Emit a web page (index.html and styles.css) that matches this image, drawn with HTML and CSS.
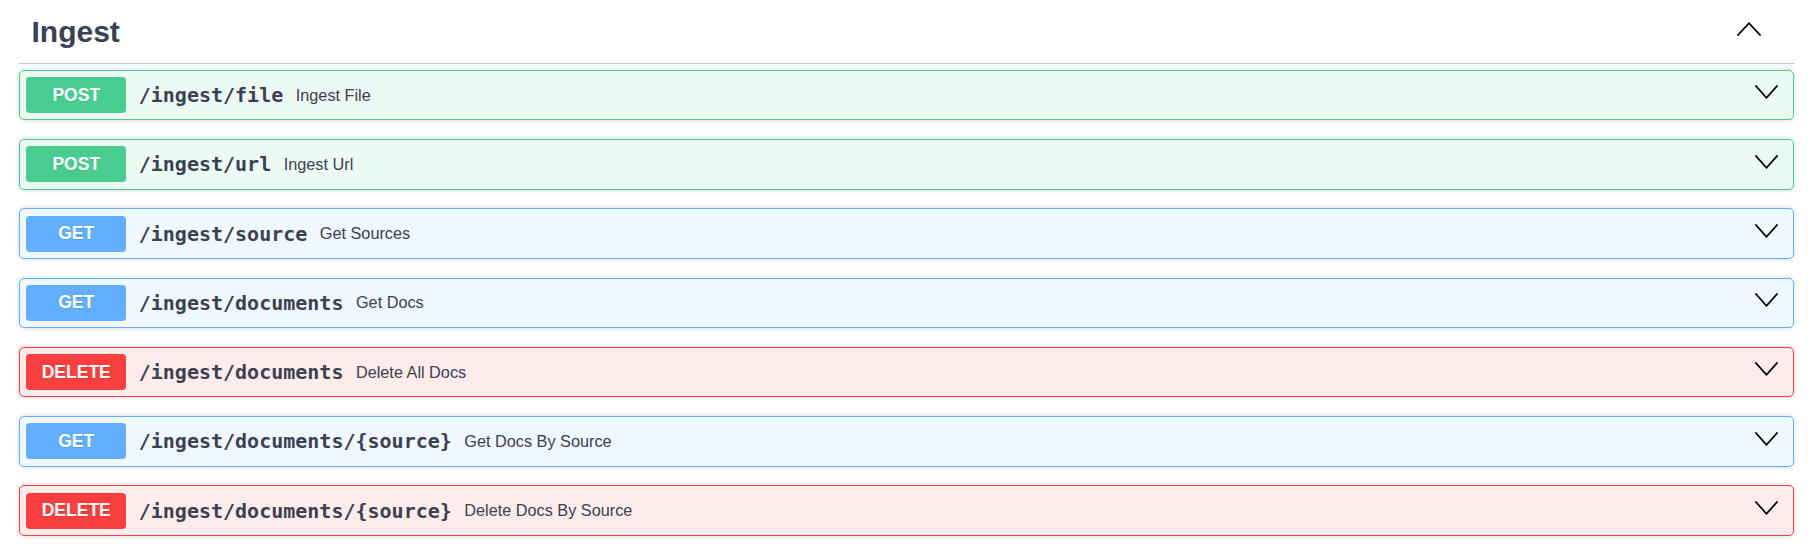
FILE: index.html
```html
<!DOCTYPE html>
<html>
<head>
<meta charset="utf-8">
<title>Ingest</title>
<link rel="stylesheet" href="styles.css">
</head>
<body>
<div class="wrapper">
  <section class="tag-section">
    <div class="tag-header">
      <h3 class="tag-title">Ingest</h3>
      <button class="expand-btn" aria-label="collapse">
        <svg width="24" height="14" viewBox="0 0 24 14"><polyline points="1,13 12,1.2 23,13"/></svg>
      </button>
    </div>
    <div class="ops">
      <div class="op op-post">
        <div class="summary">
          <span class="method">POST</span>
          <span class="path">/ingest/file</span>
          <span class="desc">Ingest File</span>
          <span class="arrow"><svg width="23" height="14" viewBox="0 0 23 14"><polyline points="1,1 11.5,12.8 22,1"/></svg></span>
        </div>
      </div>
      <div class="op op-post">
        <div class="summary">
          <span class="method">POST</span>
          <span class="path">/ingest/url</span>
          <span class="desc">Ingest Url</span>
          <span class="arrow"><svg width="23" height="14" viewBox="0 0 23 14"><polyline points="1,1 11.5,12.8 22,1"/></svg></span>
        </div>
      </div>
      <div class="op op-get">
        <div class="summary">
          <span class="method">GET</span>
          <span class="path">/ingest/source</span>
          <span class="desc">Get Sources</span>
          <span class="arrow"><svg width="23" height="14" viewBox="0 0 23 14"><polyline points="1,1 11.5,12.8 22,1"/></svg></span>
        </div>
      </div>
      <div class="op op-get">
        <div class="summary">
          <span class="method">GET</span>
          <span class="path">/ingest/documents</span>
          <span class="desc">Get Docs</span>
          <span class="arrow"><svg width="23" height="14" viewBox="0 0 23 14"><polyline points="1,1 11.5,12.8 22,1"/></svg></span>
        </div>
      </div>
      <div class="op op-delete">
        <div class="summary">
          <span class="method">DELETE</span>
          <span class="path">/ingest/documents</span>
          <span class="desc">Delete All Docs</span>
          <span class="arrow"><svg width="23" height="14" viewBox="0 0 23 14"><polyline points="1,1 11.5,12.8 22,1"/></svg></span>
        </div>
      </div>
      <div class="op op-get">
        <div class="summary">
          <span class="method">GET</span>
          <span class="path">/ingest/documents/{source}</span>
          <span class="desc">Get Docs By Source</span>
          <span class="arrow"><svg width="23" height="14" viewBox="0 0 23 14"><polyline points="1,1 11.5,12.8 22,1"/></svg></span>
        </div>
      </div>
      <div class="op op-delete">
        <div class="summary">
          <span class="method">DELETE</span>
          <span class="path">/ingest/documents/{source}</span>
          <span class="desc">Delete Docs By Source</span>
          <span class="arrow"><svg width="23" height="14" viewBox="0 0 23 14"><polyline points="1,1 11.5,12.8 22,1"/></svg></span>
        </div>
      </div>
    </div>
  </section>
</div>
</body>
</html>
```

FILE: styles.css
```css
html, body {
  margin: 0;
  padding: 0;
  background: #ffffff;
}

body {
  font-family: "Liberation Sans", Arial, sans-serif;
  color: #3b4151;
}

.wrapper {
  padding: 1px 15px 0 19px;
}

.tag-header {
  display: flex;
  align-items: center;
  padding: 13.5px 33px 13.5px 12.5px;
  border-bottom: 1px solid rgba(59, 65, 81, 0.3);
  margin-bottom: 6.25px;
}

.tag-title {
  flex: 1;
  margin: 0;
  font-size: 30px;
  font-weight: 700;
  line-height: 34.5px;
  color: #3b4151;
}

.expand-btn {
  display: flex;
  align-items: center;
  background: none;
  border: none;
  padding: 0;
  margin: 0 0 5.5px 12.5px;
  cursor: pointer;
}

.expand-btn svg,
.arrow svg {
  display: block;
  fill: none;
  stroke: #000;
  stroke-width: 1.7;
  stroke-linecap: square;
  stroke-linejoin: miter;
}

.op {
  border: 1px solid;
  border-radius: 5px;
  margin-bottom: 18.75px;
  box-shadow: 0 0 4px rgba(0, 0, 0, 0.19);
}

.op-post {
  background: rgba(73, 204, 144, 0.1);
  border-color: #49cc90;
}

.op-get {
  background: rgba(97, 175, 254, 0.1);
  border-color: #61affe;
}

.op-delete {
  background: rgba(249, 62, 62, 0.1);
  border-color: #f93e3e;
}

.summary {
  display: flex;
  align-items: center;
  padding: 6.25px;
}

.method {
  min-width: 100px;
  padding: 7.5px 0;
  border-radius: 3.75px;
  font-size: 17.5px;
  font-weight: 700;
  line-height: 21px;
  text-align: center;
  color: #fff;
  text-shadow: 0 1px 0 rgba(0, 0, 0, 0.1);
}

.op-post .method { background: #49cc90; }
.op-get .method { background: #61affe; }
.op-delete .method { background: #f93e3e; }

.path {
  padding: 0 12.5px;
  font-family: "DejaVu Sans Mono", "Liberation Mono", monospace;
  font-size: 20px;
  font-weight: 700;
  color: #3b4151;
}

.desc {
  flex: 1;
  font-size: 16.25px;
  color: #3b4151;
}

.arrow {
  display: flex;
  align-items: center;
  padding: 0 8.5px 0 12.5px;
  margin-bottom: 5.5px;
}
```
